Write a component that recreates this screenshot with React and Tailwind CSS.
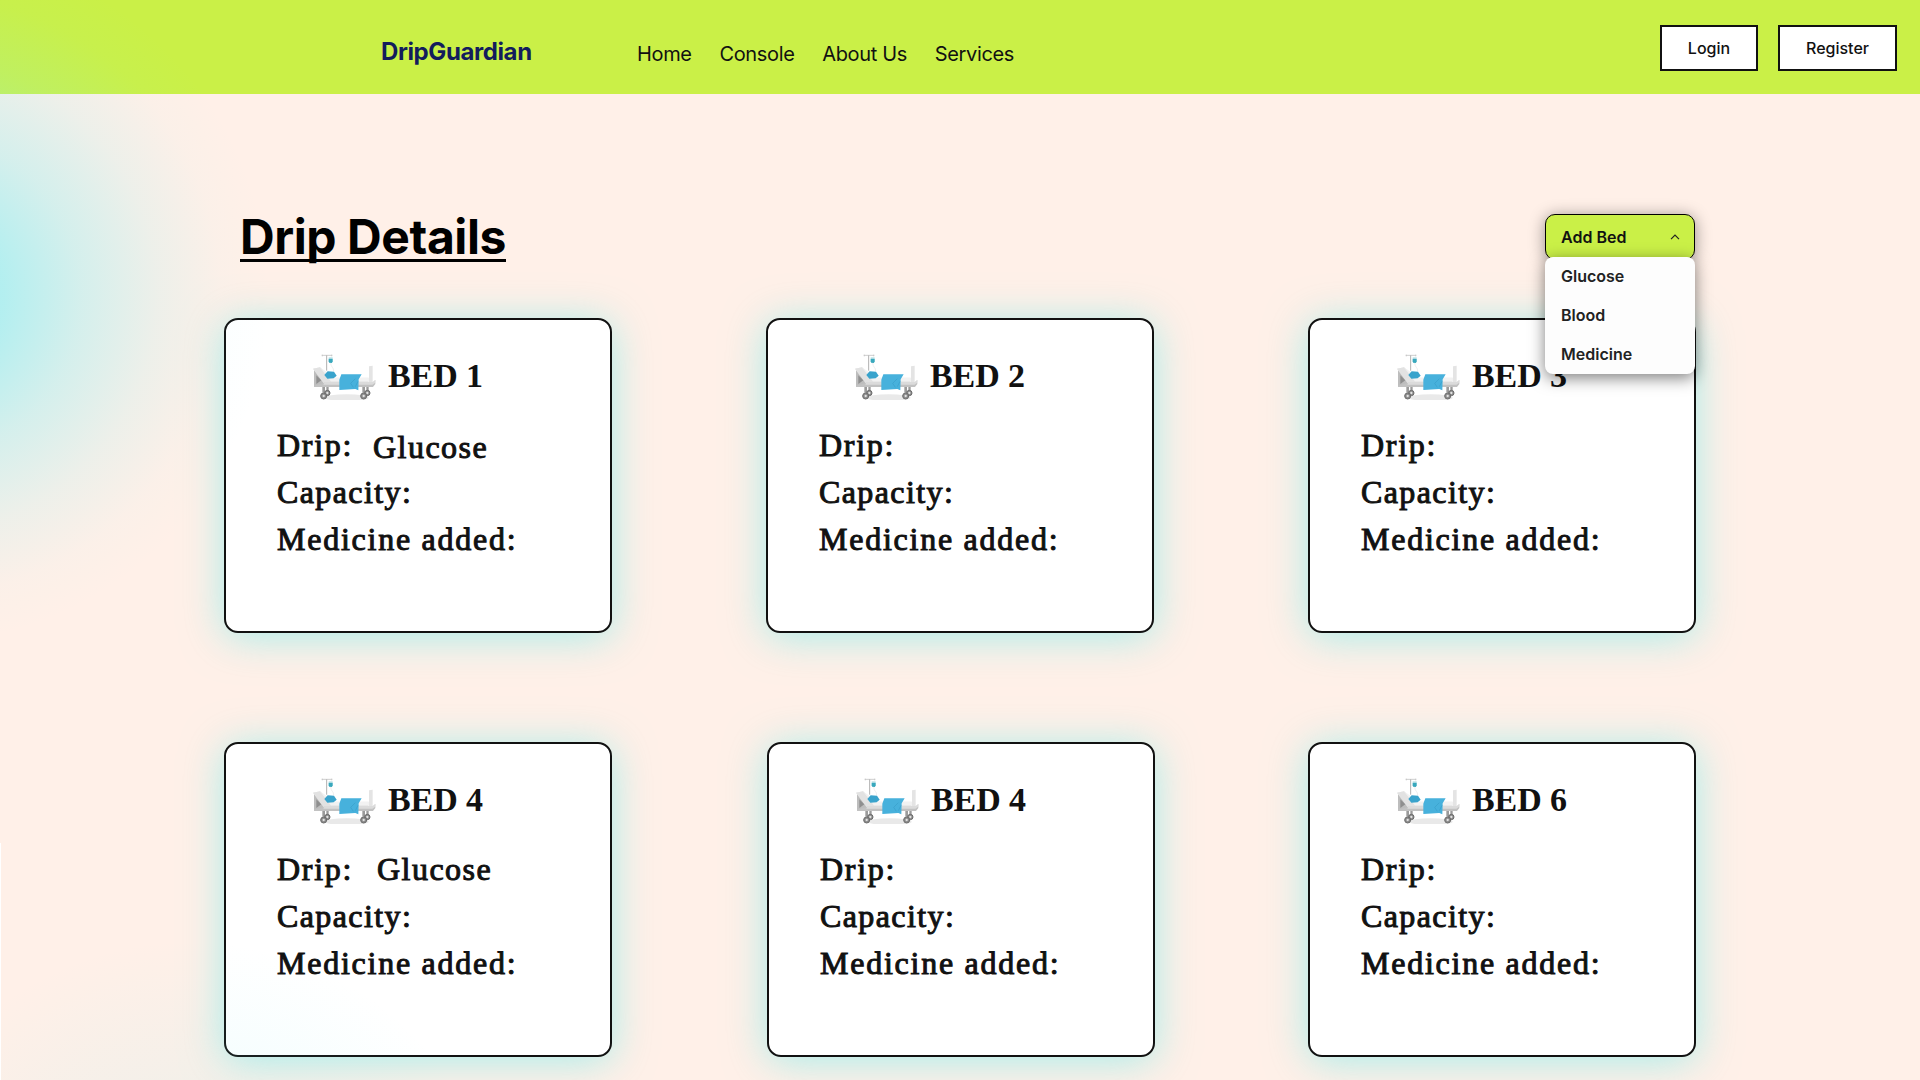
import React from "react";

const navLinks = ["Home", "Console", "About Us", "Services"];
const bedOptions = ["Glucose", "Blood", "Medicine"];

const beds = [
  { title: "BED 1", drip: "Glucose", dripClass: "relative top-0.5 ml-5" },
  { title: "BED 2" },
  { title: "BED 3" },
  { title: "BED 4", drip: "Glucose", dripClass: "ml-6" },
  { title: "BED 4", cardClass: "translate-x-px" },
  { title: "BED 6" },
];

function Wheel({ x, y, back }) {
  return (
    <g>
      <circle cx={x} cy={y} r={back ? 8 : 9} fill="#8b8b8b" stroke="#6d6d6d" strokeWidth="3" />
      <circle cx={x} cy={y} r="3.5" fill="#e2e2e2" />
    </g>
  );
}

function BedIcon() {
  return (
    <svg viewBox="36 20 198 144" className="h-12 w-[66px] shrink-0" aria-hidden="true">
      <ellipse cx="140" cy="157" rx="66" ry="10" fill="#e9e9e9" />
      <path d="M65 30H97M67 28v5M95 28v5" stroke="#c4c4c4" strokeWidth="2.5" fill="none" />
      <path d="M80 30V76" stroke="#b0b0b0" strokeWidth="3" />
      <path d="M86 35h12v14l-3 4h-6l-3-4z" fill="#cfe9ec" />
      <path d="M86 40h12v9l-3 4h-6l-3-4z" fill="#38a8bd" />
      <path d="M92 52c0 14 10 14 9 26" stroke="#dcdcdc" strokeWidth="1.5" fill="none" />
      <path d="M67 124h8v18h-8zM79 124h7v14h-7zM187 124h8v18h-8zM199 124h7v14h-7z" fill="#9b9b9b" />
      <Wheel x="82" y="143" back />
      <Wheel x="71" y="152" />
      <Wheel x="202" y="143" back />
      <Wheel x="191" y="152" />
      <path d="M42 72v53h28l5-14z" fill="#bdbdbd" />
      <path d="M49 90v26l15-11z" fill="#8f8f8f" />
      <path d="M39 70l21-4 40 31h106v18H74z" fill="#e9e9e9" />
      <path d="M39 70l21-4 34 44-22 5z" fill="#e2e2e2" />
      <path d="M207 63l11-2v50h-11z" fill="#e4e4e4" />
      <path d="M60 66l42 31h104v10H92z" fill="#f2f2f2" />
      <path d="M42 121l31-9h145l8-8v12l-7 9H42z" fill="#c2c2c2" />
      <path d="M73 110h145l8-6-1 9-8 5H70z" fill="#dbdbdb" />
      <path d="M73 89l10-11 19 1 8 12-9 8-19 1z" fill="#39a3cc" />
      <path d="M124 87h61l-9 15-1 33-9-4-48 3V103z" fill="#47b1dc" />
      <path d="M166 100l-14 14 8 12M174 108l-8 16" stroke="#389fca" strokeWidth="2" fill="none" />
    </svg>
  );
}

function Field({ label, labelClass = "", children }) {
  return (
    <div className="flex h-[47px] text-[32px] leading-[47px] [-webkit-text-stroke:1px_#111]">
      <span className={labelClass}>{label}</span>
      {children}
    </div>
  );
}

function BedCard({ bed }) {
  return (
    <article
      className={
        "h-[315px] w-[388px] rounded-[14px] border-2 border-[#111] bg-white pt-8 font-['Liberation_Serif',serif] text-[#111] shadow-[0_4px_42px_rgba(120,235,235,0.65)] " +
        (bed.cardClass || "")
      }
    >
      <div className="ml-[86px] flex h-12 items-center gap-[10px]">
        <BedIcon />
        <h2 className="text-[34px] leading-10 font-bold tracking-[-0.1px]">{bed.title}</h2>
      </div>
      <div className="mt-[22px] ml-[51px]">
        <Field label="Drip:" labelClass="tracking-[1.7px]">
          {bed.drip && <span className={"tracking-[1.45px] " + bed.dripClass}>{bed.drip}</span>}
        </Field>
        <Field label="Capacity:" labelClass="tracking-[1.4px]" />
        <Field label="Medicine added:" labelClass="tracking-[1.75px]" />
      </div>
    </article>
  );
}

function Header() {
  return (
    <header className="flex h-[94px] items-start bg-[#caf047] pl-[381px]">
      <div className="mt-9 w-[256px] text-2xl leading-8 font-bold tracking-[-0.4px] text-[#131c5c]">DripGuardian</div>
      <nav className="mt-[39.5px] flex gap-[27.8px] text-xl leading-7 tracking-[-0.35px] text-[#111]">
        {navLinks.map((l) => (
          <a key={l}>{l}</a>
        ))}
      </nav>
      <div className="mt-[25px] mr-[23px] ml-auto flex gap-5 text-base font-medium text-[#111]">
        <button className="h-[46px] w-[98px] border-2 border-[#111] bg-white">Login</button>
        <button className="h-[46px] w-[119px] border-2 border-[#111] bg-white">Register</button>
      </div>
    </header>
  );
}

function AddBedMenu() {
  return (
    <div className="relative z-10 mt-[120px] w-[150px] text-base font-semibold text-[#111]">
      <button className="flex h-[46px] w-full items-center justify-between rounded-[10px] border border-black bg-[#caf047] pr-[13px] pl-[15px] shadow-[0_2px_16px_rgba(0,0,0,0.42)]">
        Add Bed
        <svg viewBox="0 0 10 6" className="mr-px h-1.5 w-2.5" fill="none" stroke="#222" strokeWidth="1.2">
          <path d="M1 5.2 5 1.2 9 5.2" />
        </svg>
      </button>
      <ul className="absolute top-[43px] left-0 w-full rounded-lg bg-[#fdfdfd] text-[#222] shadow-[0_4px_16px_rgba(0,0,0,0.5)]">
        {bedOptions.map((o) => (
          <li key={o} className="h-[39px] px-4 leading-[39px]">
            {o}
          </li>
        ))}
      </ul>
    </div>
  );
}

export default function App() {
  return (
    <div className="relative h-[1080px] w-[1920px] overflow-hidden bg-[#fff0e8] font-['Inter',sans-serif]">
      <Header />
      <main className="pl-[224px]">
        <div className="flex h-[224px] items-start justify-between pr-[225px] pl-4">
          <h1 className="mt-[113px] text-5xl leading-[60px] font-bold tracking-[-0.42px] text-black underline decoration-[2.5px] underline-offset-[5px] [text-decoration-skip-ink:none]">
            Drip Details
          </h1>
          <AddBedMenu />
        </div>
        <div className="grid grid-cols-[repeat(3,388px)] gap-x-[154px] gap-y-[109px]">
          {beds.map((bed, i) => (
            <BedCard key={i} bed={bed} />
          ))}
        </div>
      </main>
      <div className="pointer-events-none absolute inset-0 bg-[radial-gradient(circle_350px_at_-80px_295px,rgba(130,238,245,0.75)_0%,rgba(130,238,245,0.6)_24%,rgba(130,238,245,0.34)_46%,rgba(130,238,245,0.14)_68%,rgba(130,238,245,0.03)_86%,rgba(130,238,245,0)_100%),radial-gradient(circle_320px_at_190px_1260px,rgba(130,238,245,0.25)_0%,rgba(130,238,245,0.08)_60%,rgba(130,238,245,0)_100%)]" />
      <div className="pointer-events-none absolute bottom-0 left-0 h-[237px] w-px bg-white" />
    </div>
  );
}
